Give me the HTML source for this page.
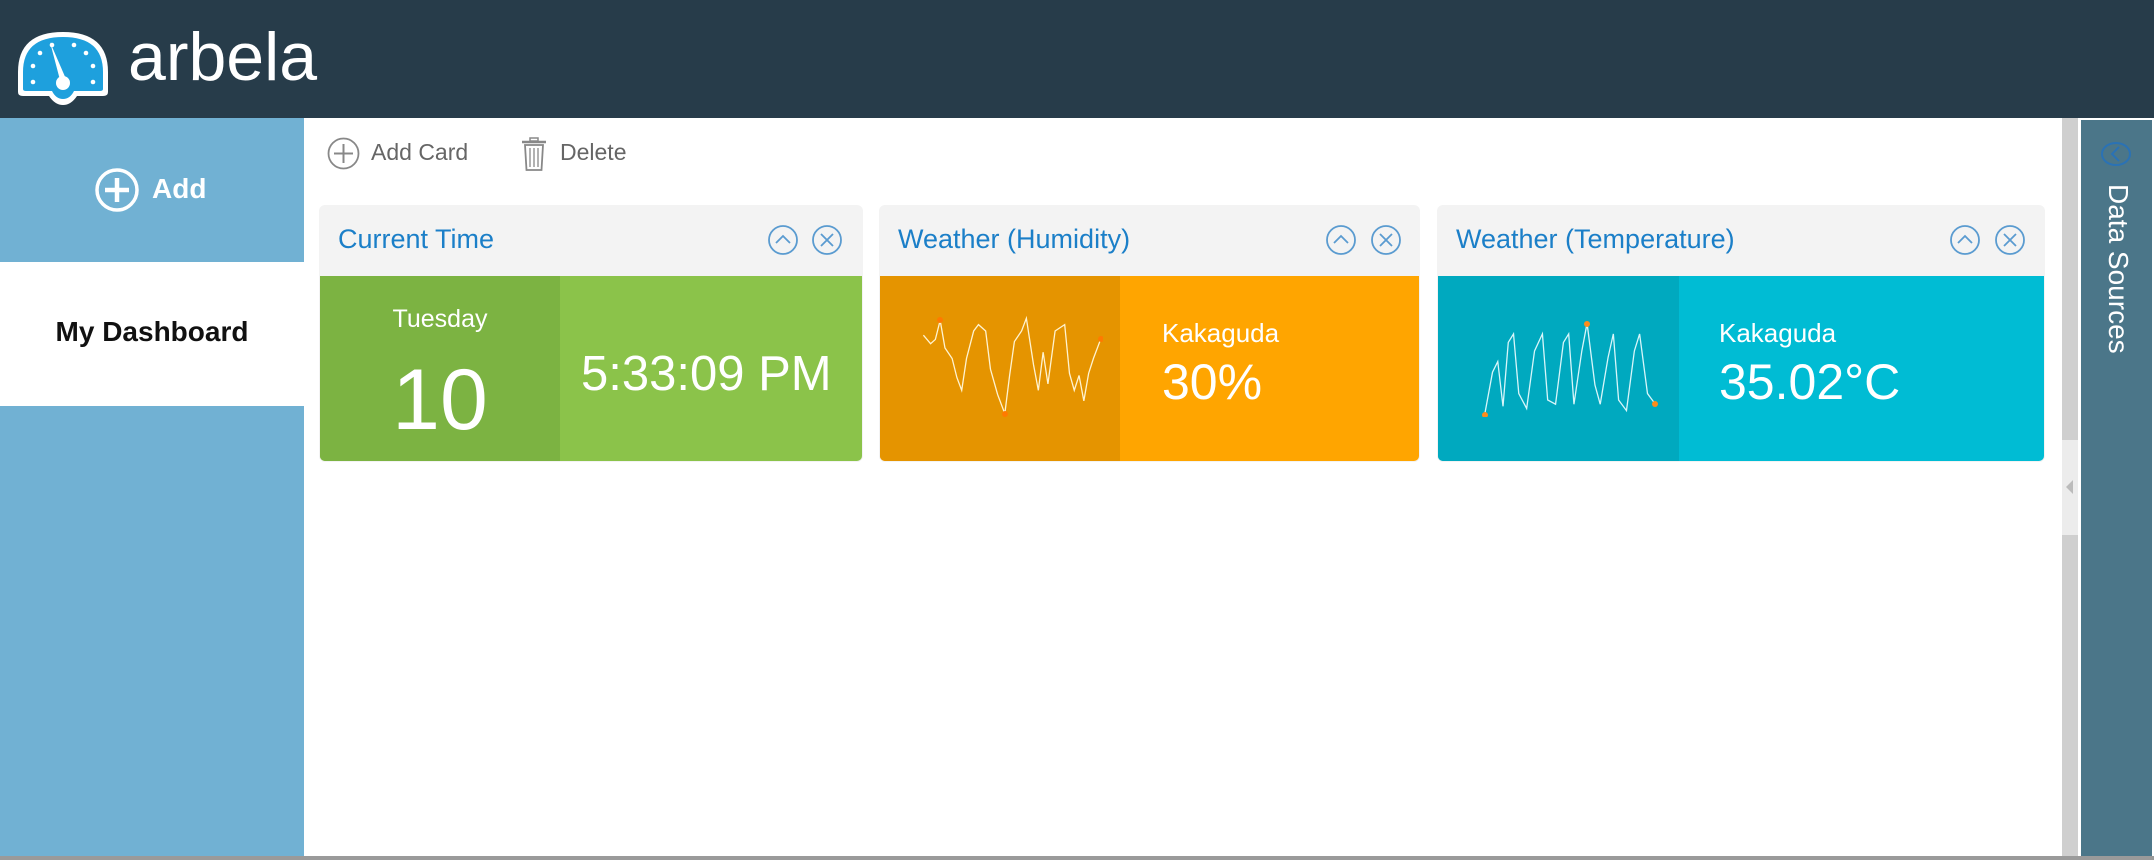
<!DOCTYPE html>
<html><head><meta charset="utf-8"><style>
*{margin:0;padding:0;box-sizing:border-box}
body{width:2154px;height:860px;overflow:hidden;background:#fff;font-family:"Liberation Sans",sans-serif;position:relative}
.abs{position:absolute}
.hdr{left:0;top:0;width:2154px;height:118px;background:#273c4a}
.side{left:0;top:118px;width:304px;height:742px;background:#71b1d3}
.card{position:absolute;top:205px;height:257px;border-radius:6px;background:#f3f3f3;overflow:hidden}
.card .t{position:absolute;left:19px;top:19px;font-size:27px;color:#1b7fc8}
.card .b{position:absolute;left:1px;right:1px;top:71px;bottom:1px;border-radius:0 0 5px 5px;overflow:hidden}
.w{color:#fff;position:absolute;white-space:nowrap}
</style></head><body>
<div class="abs hdr"></div>
<svg class="abs" style="left:15px;top:28px" width="96" height="80" viewBox="0 0 96 80">
<path d="M3 44 Q3 4 48 4 Q93 4 93 44 L93 64 Q93 68 88 68 L62 68 Q56 77 48 77 Q40 77 34 68 L8 68 Q3 68 3 64Z" fill="#fff"/>
<path d="M8 44 Q8 9 48 9 Q88 9 88 44 L88 61 Q88 63 85 63 L59 63 Q55 71 48 71 Q41 71 37 63 L11 63 Q8 63 8 61Z" fill="#1ea0dd"/>
<g fill="#fff"><circle cx="18" cy="54" r="2.3"/><circle cx="18" cy="38" r="2.3"/><circle cx="25" cy="25" r="2.3"/><circle cx="37" cy="17" r="2.3"/><circle cx="59" cy="17" r="2.3"/><circle cx="71" cy="25" r="2.3"/><circle cx="78" cy="38" r="2.3"/><circle cx="78" cy="54" r="2.3"/>
<path d="M35 14 L45 52 L51 51Z"/><circle cx="48" cy="55" r="7"/></g>
</svg>
<div class="w" style="left:128px;top:18px;font-size:68px;font-weight:300">arbela</div>
<div class="abs side"></div>
<svg class="abs" style="left:94px;top:167px" width="46" height="46" viewBox="0 0 46 46"><circle cx="23" cy="23" r="20" fill="none" stroke="#fff" stroke-width="3.5"/><path d="M23 11V35M11 23H35" stroke="#fff" stroke-width="4.5"/></svg>
<div class="w" style="left:152px;top:173px;font-size:28px;font-weight:bold">Add</div>
<div class="abs" style="left:0;top:262px;width:304px;height:144px;background:#fff"></div>
<div class="abs" style="left:0;top:316px;width:304px;text-align:center;font-size:28px;font-weight:bold;color:#111">My Dashboard</div>
<svg class="abs" style="left:327px;top:137px" width="33" height="33" viewBox="0 0 33 33"><circle cx="16.5" cy="16.5" r="15" fill="none" stroke="#888" stroke-width="1.8"/><path d="M16.5 7V26M7 16.5H26" stroke="#888" stroke-width="2"/></svg>
<div class="abs" style="left:371px;top:139px;font-size:23px;color:#666">Add Card</div>
<svg class="abs" style="left:520px;top:137px" width="28" height="35" viewBox="0 0 28 35"><rect x="10" y="1" width="8" height="3" fill="none" stroke="#888" stroke-width="1.5"/><path d="M2 5H26" stroke="#888" stroke-width="2.5"/><path d="M5 8L6.5 33H21.5L23 8Z" fill="none" stroke="#888" stroke-width="1.8"/><path d="M10 11V30M14 11V30M18 11V30" stroke="#888" stroke-width="1.3"/></svg>
<div class="abs" style="left:560px;top:139px;font-size:23px;color:#666">Delete</div>

<!-- card1 -->
<div class="card" style="left:319px;width:544px">
<div class="t">Current Time</div>
<div class="b" style="background:#8bc34a"><div class="abs" style="left:0;top:0;width:240px;height:100%;background:#7cb342"></div>
<div class="w" style="left:0;width:240px;text-align:center;top:29px;font-size:25px;font-weight:300">Tuesday</div>
<div class="w" style="left:0;width:240px;text-align:center;top:75px;font-size:86px;font-weight:300">10</div>
<div class="w" style="left:261px;top:70px;font-size:49px;font-weight:300">5:33:09 PM</div></div>
</div>
<!-- card2 -->
<div class="card" style="left:879px;width:541px">
<div class="t">Weather (Humidity)</div>
<div class="b" style="background:#ffa500"><div class="abs" style="left:0;top:0;width:240px;height:100%;background:#e59400"></div>
<svg class="abs" style="left:41px;top:38px" width="182" height="106" viewBox="0 0 152 100" preserveAspectRatio="none"><polyline fill="none" stroke="#fff3d0" stroke-width="1.3" vector-effect="non-scaling-stroke" points="2,20 8,28 12,24 16,6 20,32 26,42 30,60 34,72 38,42 44,16 48,10 54,16 58,52 64,76 70,94 74,58 78,26 84,16 88,4 94,48 98,72 102,36 106,66 112,16 120,10 124,56 128,72 132,58 136,82 140,56 144,42 150,24"/></svg>
<svg class="abs" style="left:41px;top:38px" width="182" height="106"><g fill="#ff7a00"><circle cx="19" cy="6" r="3"/><circle cx="84" cy="100" r="3"/><circle cx="180" cy="25" r="3"/></g></svg>
<div class="w" style="left:282px;top:42px;font-size:26px;font-weight:300">Kakaguda</div>
<div class="w" style="left:282px;top:77px;font-size:50px;font-weight:300">30%</div></div>
</div>
<!-- card3 -->
<div class="card" style="left:1437px;width:608px">
<div class="t">Weather (Temperature)</div>
<div class="b" style="background:#00bcd4"><div class="abs" style="left:0;top:0;width:241px;height:100%;background:#00a9bf"></div>
<svg class="abs" style="left:44px;top:43px" width="176" height="98" viewBox="0 0 134 92" preserveAspectRatio="none"><polyline fill="none" stroke="#d8f6fa" stroke-width="1.3" vector-effect="non-scaling-stroke" points="2,90 8,50 12,40 16,82 20,22 24,14 28,70 34,84 40,30 46,14 50,76 56,80 62,22 66,14 70,80 76,30 80,4 86,62 90,80 96,36 100,14 104,76 110,86 116,30 120,14 126,70 132,80"/></svg>
<svg class="abs" style="left:44px;top:43px" width="176" height="98"><g fill="#ff8c1a"><circle cx="3" cy="96" r="3"/><circle cx="105" cy="5" r="3"/><circle cx="173" cy="85" r="3"/></g></svg>
<div class="w" style="left:281px;top:42px;font-size:26px;font-weight:300">Kakaguda</div>
<div class="w" style="left:281px;top:77px;font-size:50px;font-weight:300">35.02°C</div></div>
</div>
<!-- card header icons -->
<svg class="abs" style="left:0;top:0" width="2154" height="300">
<g fill="none" stroke="#5a9bd0" stroke-width="1.8">
<circle cx="783" cy="240" r="14"/><path d="M776 243L783 236L790 243"/>
<circle cx="827" cy="240" r="14"/><path d="M821 234L833 246M833 234L821 246"/>
<circle cx="1341" cy="240" r="14"/><path d="M1334 243L1341 236L1348 243"/>
<circle cx="1386" cy="240" r="14"/><path d="M1380 234L1392 246M1392 234L1380 246"/>
<circle cx="1965" cy="240" r="14"/><path d="M1958 243L1965 236L1972 243"/>
<circle cx="2010" cy="240" r="14"/><path d="M2004 234L2016 246M2016 234L2004 246"/>
</g></svg>
<!-- scrollbar -->
<div class="abs" style="left:2062px;top:118px;width:16px;height:742px;background:#cfcfcf"></div>
<div class="abs" style="left:2062px;top:440px;width:16px;height:95px;background:#ececec"></div>
<div class="abs" style="left:2066px;top:480px;width:0;height:0;border-right:7px solid #bbb;border-top:7px solid transparent;border-bottom:7px solid transparent"></div>
<!-- right panel -->
<div class="abs" style="left:2079px;top:118px;width:75px;height:742px;background:#fff"></div>
<div class="abs" style="left:2081px;top:120px;width:71px;height:736px;background:#4b7689"></div>
<div class="abs" style="left:0;top:856px;width:2154px;height:4px;background:#9a9a9a"></div>
<svg class="abs" style="left:2100px;top:140px" width="32" height="28" viewBox="0 0 32 28"><ellipse cx="16" cy="14" rx="14" ry="11" fill="none" stroke="#2a72b5" stroke-width="2"/><path d="M19 7L12 14L19 21" fill="none" stroke="#2a72b5" stroke-width="2"/></svg>
<div class="w" style="left:2102px;top:184px;font-size:28px;font-weight:300;writing-mode:vertical-rl">Data Sources</div>
</body></html>
